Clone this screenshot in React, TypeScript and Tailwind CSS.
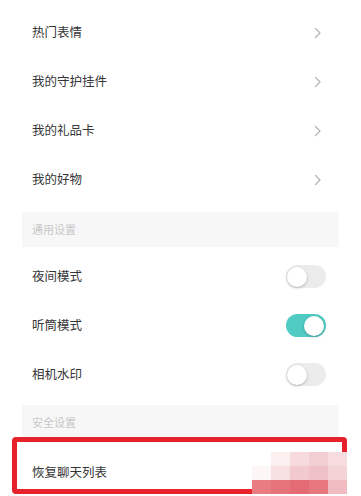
import React from 'react';

type RowProps = {
  readonly label: string;
  readonly right?: React.ReactNode;
};

function Chevron(): JSX.Element {
  return (
    <svg width="8" height="12" viewBox="0 0 8 12" fill="none" className="mr-[4px]">
      <path d="M1.5 1.5 L6 6 L1.5 10.5" stroke="#b5b5b5" strokeWidth="1.3" strokeLinecap="round" strokeLinejoin="round" />
    </svg>
  );
}

function Toggle({ on }: { readonly on: boolean }): JSX.Element {
  return (
    <div
      className={
        on
          ? 'flex h-[23px] w-[40px] items-center justify-end rounded-full bg-[#4fcbc3] px-[2px]'
          : 'flex h-[23px] w-[40px] items-center justify-start rounded-full bg-[#ececec] px-[1px]'
      }
    >
      <div className="h-[20px] w-[20px] rounded-full bg-white shadow-[0_1px_3px_rgba(0,0,0,0.25)]" />
    </div>
  );
}

function Row({ label, right }: RowProps): JSX.Element {
  return (
    <div className="flex h-[49px] items-center justify-between pl-[10px] pr-[13px]">
      <span className="text-[12.5px] text-[#353535]">{label}</span>
      {right}
    </div>
  );
}

function Header({ label, className }: { readonly label: string; readonly className: string }): JSX.Element {
  return (
    <div className={`flex h-[35px] items-center bg-[#f7f7f7] pl-[10px] ${className}`}>
      <span className="text-[11px] text-[#c8c8c8]">{label}</span>
    </div>
  );
}

const mosaic: readonly (readonly string[])[] = [
  ['#ffffff', '#fbeff0', '#f6dadd', '#f3cfd3', '#f6dcdf'],
  ['#fdf6f6', '#f7e0e2', '#f2c9cd', '#efc0c5', '#f4d3d6'],
  ['#e97b82', '#e6727a', '#e46a73', '#e7777f', '#f0bcc1'],
];

export default function App(): JSX.Element {
  return (
    <div
      className="relative h-[496px] w-[361px] overflow-hidden bg-white"
      style={{ fontFamily: '"Noto Sans CJK SC", "Noto Sans", sans-serif' }}
    >
      <div className="px-[22px] pt-[8px]">
        <Row label="热门表情" right={<Chevron />} />
        <Row label="我的守护挂件" right={<Chevron />} />
        <Row label="我的礼品卡" right={<Chevron />} />
        <Row label="我的好物" right={<Chevron />} />
        <Header label="通用设置" className="mb-[5px] mt-[8px]" />
        <Row label="夜间模式" right={<Toggle on={false} />} />
        <Row label="听筒模式" right={<Toggle on />} />
        <Row label="相机水印" right={<Toggle on={false} />} />
        <Header label="安全设置" className="mb-[8px] mt-[6px]" />
        <Row label="恢复聊天列表" />
      </div>

      <div className="absolute left-[12px] top-[437px] h-[57px] w-[335px] rounded-[4px] border-[5px] border-[#e8222a]" />

      <div className="absolute left-[252px] top-[452px] grid grid-cols-5">
        {mosaic.map((line, i) =>
          line.map((c, j) => (
            <div key={`${i}-${j}`} className="h-[14px] w-[19px]" style={{ backgroundColor: c }} />
          ))
        )}
      </div>
    </div>
  );
}
